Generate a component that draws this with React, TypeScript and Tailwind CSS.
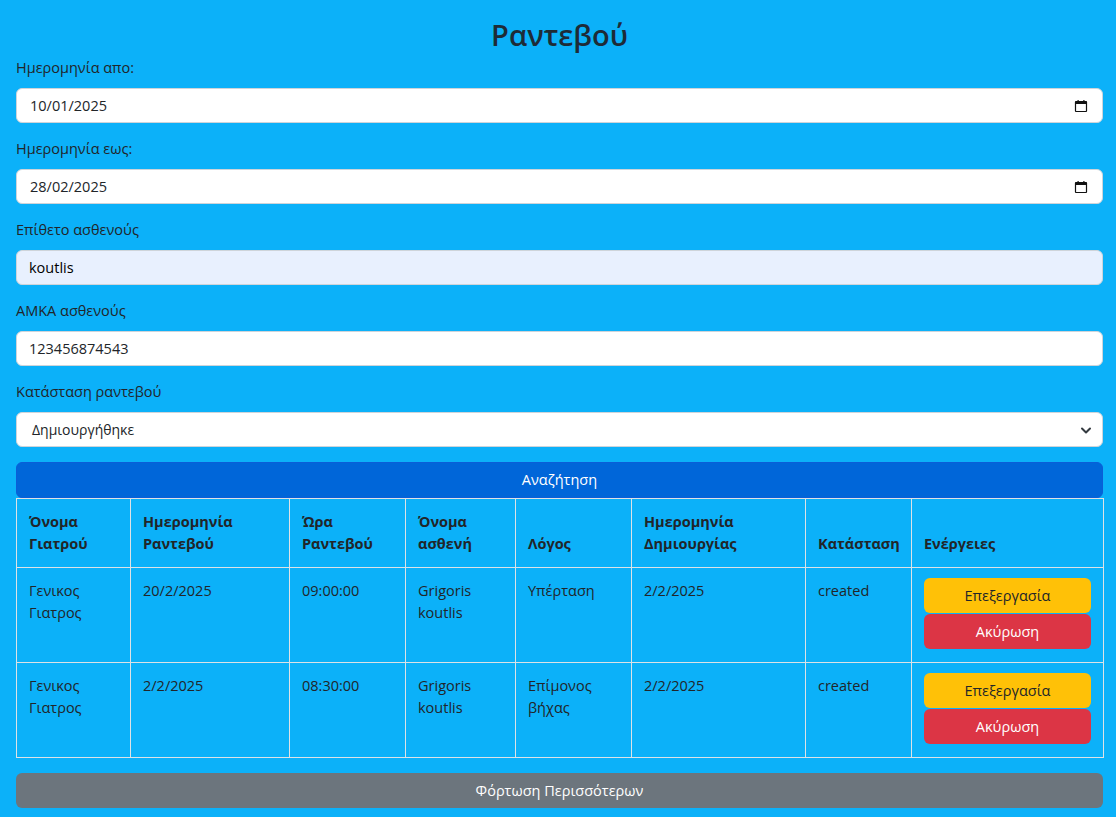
import React from 'react';

type Appt = {
  doctor: string;
  date: string;
  time: string;
  patient: string;
  reason: string;
  created: string;
  status: string;
};

const ROWS: Appt[] = [
  { doctor: 'Γενικος Γιατρος', date: '20/2/2025', time: '09:00:00', patient: 'Grigoris koutlis', reason: 'Υπέρταση', created: '2/2/2025', status: 'created' },
  { doctor: 'Γενικος Γιατρος', date: '2/2/2025', time: '08:30:00', patient: 'Grigoris koutlis', reason: 'Επίμονος βήχας', created: '2/2/2025', status: 'created' },
];

const HEADERS = [
  ['Όνομα', 'Γιατρού'],
  ['Ημερομηνία', 'Ραντεβού'],
  ['Ώρα', 'Ραντεβού'],
  ['Όνομα', 'ασθενή'],
  ['Λόγος'],
  ['Ημερομηνία', 'Δημιουργίας'],
  ['Κατάσταση'],
  ['Ενέργειες'],
];

const COLS = [114, 159, 116, 110, 116, 174, 106, 192];

function CalendarIcon() {
  return (
    <svg width="14" height="14" viewBox="0 0 14 14" className="shrink-0">
      <rect x="1.5" y="2.5" width="11" height="10" fill="none" stroke="#111" strokeWidth="1.2" rx="0.5" />
      <rect x="1.5" y="2.5" width="11" height="2.5" fill="#111" />
      <rect x="3.5" y="1" width="1.2" height="2" fill="#111" />
      <rect x="9.3" y="1" width="1.2" height="2" fill="#111" />
    </svg>
  );
}

function Field({ label, children }: { label: string; children: React.ReactNode }) {
  return (
    <div className="flex flex-col">
      <label className="h-6 mb-2 leading-6 text-[14.5px] text-[#212529]">{label}</label>
      {children}
    </div>
  );
}

function DateBox({ value }: { value: string }) {
  return (
    <div className="h-[35px] flex items-center justify-between bg-white border border-[#ced4da] rounded-md pl-[13px] pr-[14px] text-[14.5px] text-[#212529]">
      <span>{value}</span>
      <CalendarIcon />
    </div>
  );
}

export default function App() {
  return (
    <div className="min-h-[817px] bg-[#0cb1f9] pl-4 pr-[13px] pb-2 font-['Open_Sans',sans-serif] text-[#212529]">
      <h2 className="pt-[16px] h-[56px] text-center text-[29px] leading-[38px] font-semibold text-[#1e2b37]">Ραντεβού</h2>

      <div className="flex flex-col gap-[14px]">
        <Field label="Ημερομηνία απο:">
          <DateBox value="10/01/2025" />
        </Field>
        <Field label="Ημερομηνία εως:">
          <DateBox value="28/02/2025" />
        </Field>
        <Field label="Επίθετο ασθενούς">
          <div className="h-[35px] flex items-center bg-[#e8f0fe] border border-[#ced4da] rounded-md px-[12px] text-[14.5px] text-black">koutlis</div>
        </Field>
        <Field label="ΑΜΚΑ ασθενούς">
          <div className="h-[35px] flex items-center bg-white border border-[#ced4da] rounded-md px-[12px] text-[14.5px] text-[#212529]">123456874543</div>
        </Field>
        <Field label="Κατάσταση ραντεβού">
          <div className="h-[35px] flex items-center justify-between bg-white border border-[#ced4da] rounded-md pl-[15px] pr-[10px] text-[14px] text-[#212529]">
            <span>Δημιουργήθηκε</span>
            <svg width="12" height="10" viewBox="0 0 12 10">
              <path d="M2 3.5 L6 7.5 L10 3.5" fill="none" stroke="#343a40" strokeWidth="2" strokeLinecap="round" strokeLinejoin="round" />
            </svg>
          </div>
        </Field>
      </div>

      <button className="mt-[15px] w-full h-[36px] bg-[#0066d9] text-white text-[14.5px] rounded-md border border-[#0b5ed7]">Αναζήτηση</button>

      <table className="w-full table-fixed border-collapse text-[14.5px] leading-[22px]">
        <colgroup>
          {COLS.map((w, i) => (
            <col key={i} style={{ width: w }} />
          ))}
        </colgroup>
        <thead>
          <tr>
            {HEADERS.map((h, i) => (
              <th key={i} className="border border-[#dee2e6] p-3 text-left align-bottom font-bold text-[#212529]">
                {h.map((line, j) => (
                  <div key={j}>{line}</div>
                ))}
              </th>
            ))}
          </tr>
        </thead>
        <tbody>
          {ROWS.map((r, i) => (
            <tr key={i} className="h-[95px]">
              <td className="border border-[#dee2e6] p-3 align-top">
                {r.doctor.split(' ').map((w, j) => (
                  <div key={j}>{w}</div>
                ))}
              </td>
              <td className="border border-[#dee2e6] p-3 align-top">{r.date}</td>
              <td className="border border-[#dee2e6] p-3 align-top">{r.time}</td>
              <td className="border border-[#dee2e6] p-3 align-top">
                {r.patient.split(' ').map((w, j) => (
                  <div key={j}>{w}</div>
                ))}
              </td>
              <td className="border border-[#dee2e6] p-3 align-top">
                {r.reason.split(' ').map((w, j) => (
                  <div key={j}>{w}</div>
                ))}
              </td>
              <td className="border border-[#dee2e6] p-3 align-top">{r.created}</td>
              <td className="border border-[#dee2e6] p-3 align-top">{r.status}</td>
              <td className="border border-[#dee2e6] px-3 pt-[10px] pb-3 align-top">
                <div className="flex flex-col gap-[1px]">
                  <button className="h-[35px] w-full rounded-md bg-[#ffc107] text-[#212529] text-[14.5px]">Επεξεργασία</button>
                  <button className="h-[35px] w-full rounded-md bg-[#dc3545] text-white text-[14.5px]">Ακύρωση</button>
                </div>
              </td>
            </tr>
          ))}
        </tbody>
      </table>

      <button className="mt-[15px] w-full h-[35px] bg-[#6c757d] text-white text-[14.5px] rounded-md">Φόρτωση Περισσότερων</button>
    </div>
  );
}
